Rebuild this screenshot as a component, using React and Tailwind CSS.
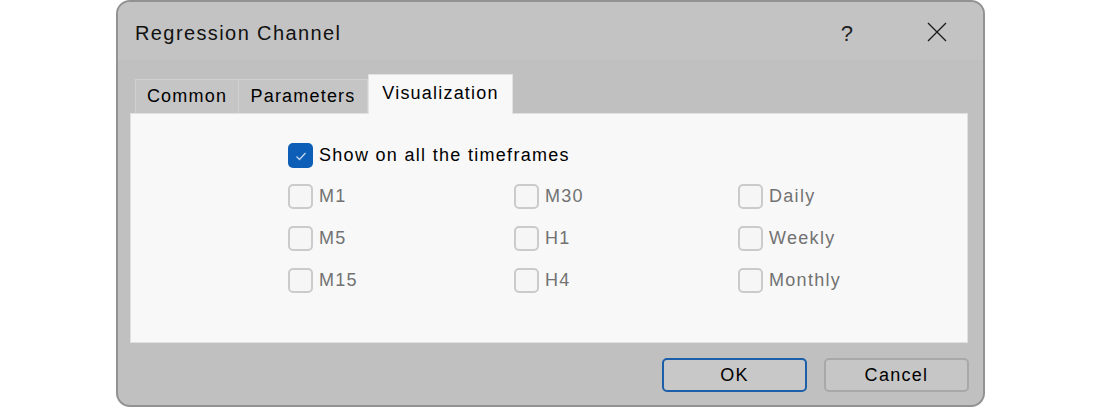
import React from 'react';

const pix = { fontFamily: '"Liberation Sans", Arial, sans-serif' };

const frames = [
  ['M1', 'M30', 'Daily'],
  ['M5', 'H1', 'Weekly'],
  ['M15', 'H4', 'Monthly'],
];

function Box({ checked }) {
  if (checked) {
    return (
      <span className="flex h-[25px] w-[25px] items-center justify-center rounded-[5px] bg-[#0c5eb6]">
        <svg width="14" height="12" viewBox="0 0 14 12" fill="none">
          <path d="M2.5 6.5 L5.5 9.5 L11.5 3" stroke="#c4d8f0" strokeWidth="1.3" />
        </svg>
      </span>
    );
  }
  return <span className="h-[25px] w-[25px] rounded-[5px] border-2 border-[#cbcbcb] bg-[#f6f6f6]" />;
}

export default function App() {
  return (
    <div className="h-[408px] w-[1100px] bg-white" style={pix}>
      <div className="ml-[116px] flex h-[407px] w-[869px] flex-col rounded-[14px] border-2 border-[#929292] bg-[#c0c0c0]">
        {/* title bar */}
        <div className="flex h-[58px] items-start rounded-t-[12px] bg-[#c3c3c4] pl-[17px] pr-[36px]">
          <span className="mt-[16px] text-[20px] tracking-[1.4px] text-[#111]">Regression Channel</span>
          <span className="ml-auto mt-[15px] text-[22px] text-[#222]">?</span>
          <svg className="ml-[74px] mt-[20px]" width="20" height="20" viewBox="0 0 20 20">
            <path d="M1 1 L19 19 M19 1 L1 19" stroke="#1a1a1a" strokeWidth="1.3" />
          </svg>
        </div>

        {/* tabs */}
        <div className="mt-[14px] flex h-[39px] items-end pl-[17px]">
          <div className="flex h-[34px] w-[104px] items-center justify-center border border-b-0 border-[#d0d0d0] bg-[#c5c5c5] text-[18px] tracking-[1.2px] text-black">
            Common
          </div>
          <div className="flex h-[34px] w-[129px] items-center justify-center border border-b-0 border-l-0 border-[#d0d0d0] bg-[#c5c5c5] text-[18px] tracking-[1.2px] text-black">
            Parameters
          </div>
          <div className="relative z-10 mb-[-1px] flex h-[40px] w-[145px] items-start justify-center border border-b-0 border-[#e2e2e2] bg-[#f8f8f8] pt-[5px] text-[18px] tracking-[1.2px] text-black">
            Visualization
          </div>
        </div>

        {/* panel */}
        <div className="ml-[12px] h-[230px] w-[838px] border border-[#e0e0e0] bg-[#f8f8f8] pl-[157px] pt-[29px]">
          <div className="flex items-center gap-[6px]">
            <Box checked />
            <span className="text-[18px] leading-[25px] tracking-[1.3px] text-black">Show on all the timeframes</span>
          </div>
          <div className="mt-[16px] flex flex-col gap-[17px]">
            {frames.map((row, i) => (
              <div key={i} className="grid grid-cols-[226px_224px_200px]">
                {row.map((label) => (
                  <div key={label} className="flex items-center gap-[6px]">
                    <Box />
                    <span className="text-[18px] leading-[25px] tracking-[1.3px] text-[#727272]">{label}</span>
                  </div>
                ))}
              </div>
            ))}
          </div>
        </div>

        {/* buttons */}
        <div className="mt-[15px] flex justify-end gap-[17px] pr-[14px]">
          <button className="flex h-[34px] w-[145px] items-center justify-center rounded-[5px] border-2 border-[#1c5fa8] bg-[#c8c8c8] text-[18px] tracking-[1.3px] text-black">
            OK
          </button>
          <button className="flex h-[34px] w-[145px] items-center justify-center rounded-[5px] border-2 border-[#a8a8a8] bg-[#c6c6c6] text-[18px] tracking-[1.3px] text-black">
            Cancel
          </button>
        </div>
      </div>
    </div>
  );
}
